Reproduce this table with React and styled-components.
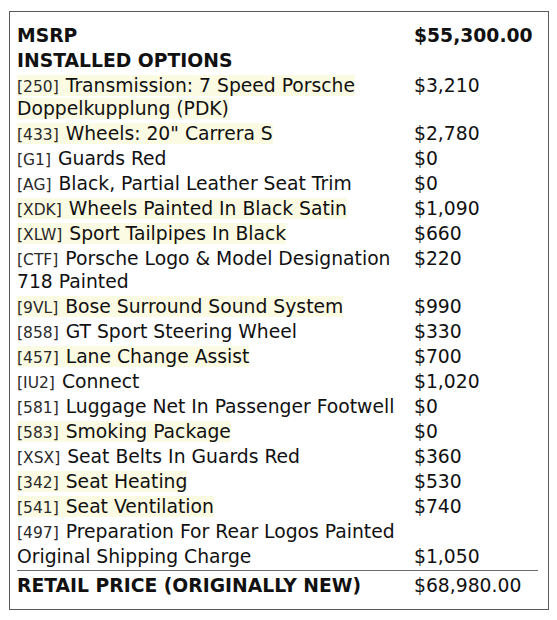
import React from 'react'
import styled, { createGlobalStyle } from 'styled-components'

const GlobalStyle = createGlobalStyle`
    body {
        margin: 0;
        background: #fff;
        font-family: "DejaVu Sans", Verdana, sans-serif;
        color: #111;
    }
`

const options = [
    { code: '250', name: 'Transmission: 7 Speed Porsche Doppelkupplung (PDK)', price: '$3,210', hl: true },
    { code: '433', name: 'Wheels: 20" Carrera S', price: '$2,780', hl: true },
    { code: 'G1', name: 'Guards Red', price: '$0' },
    { code: 'AG', name: 'Black, Partial Leather Seat Trim', price: '$0' },
    { code: 'XDK', name: 'Wheels Painted In Black Satin', price: '$1,090', hl: true },
    { code: 'XLW', name: 'Sport Tailpipes In Black', price: '$660', hl: true },
    { code: 'CTF', name: 'Porsche Logo & Model Designation 718 Painted', price: '$220' },
    { code: '9VL', name: 'Bose Surround Sound System', price: '$990', hl: true },
    { code: '858', name: 'GT Sport Steering Wheel', price: '$330' },
    { code: '457', name: 'Lane Change Assist', price: '$700', hl: true },
    { code: 'IU2', name: 'Connect', price: '$1,020' },
    { code: '581', name: 'Luggage Net In Passenger Footwell', price: '$0' },
    { code: '583', name: 'Smoking Package', price: '$0', hl: true },
    { code: 'XSX', name: 'Seat Belts In Guards Red', price: '$360' },
    { code: '342', name: 'Seat Heating', price: '$530', hl: true },
    { code: '541', name: 'Seat Ventilation', price: '$740', hl: true },
    { code: '497', name: 'Preparation For Rear Logos Painted', price: '' },
]

const App = () => {
    return (
        <>
            <GlobalStyle />
            <Sticker>
                <Table>
                    <Label bold>MSRP</Label>
                    <Price bold>$55,300.00</Price>
                    <Label bold>INSTALLED OPTIONS</Label>
                    <Price />
                    {options.map((o) => (
                        <React.Fragment key={o.code}>
                            <Label>
                                <Mark hl={o.hl}>
                                    <Code>[{o.code}]</Code> {o.name}
                                </Mark>
                            </Label>
                            <Price>{o.price}</Price>
                        </React.Fragment>
                    ))}
                    <Label>Original Shipping Charge</Label>
                    <Price>$1,050</Price>
                    <Label bold total>RETAIL PRICE (ORIGINALLY NEW)</Label>
                    <Price total>$68,980.00</Price>
                </Table>
            </Sticker>
        </>
    )
}

export default App

const Sticker = styled.div`
    margin: 11px 0 0 9px;
    width: 540px;
    box-sizing: border-box;
    border: 1px solid #5a5a5a;
    padding: 11px 10px 11px 7px;
`

const Table = styled.div`
    display: grid;
    grid-template-columns: 397px 1fr;
    font-size: 18.75px;
    line-height: 23px;
`

const Label = styled.div`
    padding: 1px 4px 1px 0;
    font-weight: ${(p) => (p.bold ? 700 : 400)};
    ${(p) => p.total && `
        border-top: 1px solid #6a6a6a;
        padding-top: 3px;
        margin-top: 1px;
    `}
`

const Price = styled.div`
    padding: 1px 0;
    font-weight: ${(p) => (p.bold ? 700 : 400)};
    ${(p) => p.total && `
        border-top: 1px solid #6a6a6a;
        padding-top: 3px;
        margin-top: 1px;
    `}
`

const Mark = styled.span`
    background: ${(p) => (p.hl ? '#fbfae2' : 'transparent')};
`

const Code = styled.span`
    font-size: 15.5px;
    line-height: 1;
    margin-right: 1px;
    color: #2a2a2a;
`
